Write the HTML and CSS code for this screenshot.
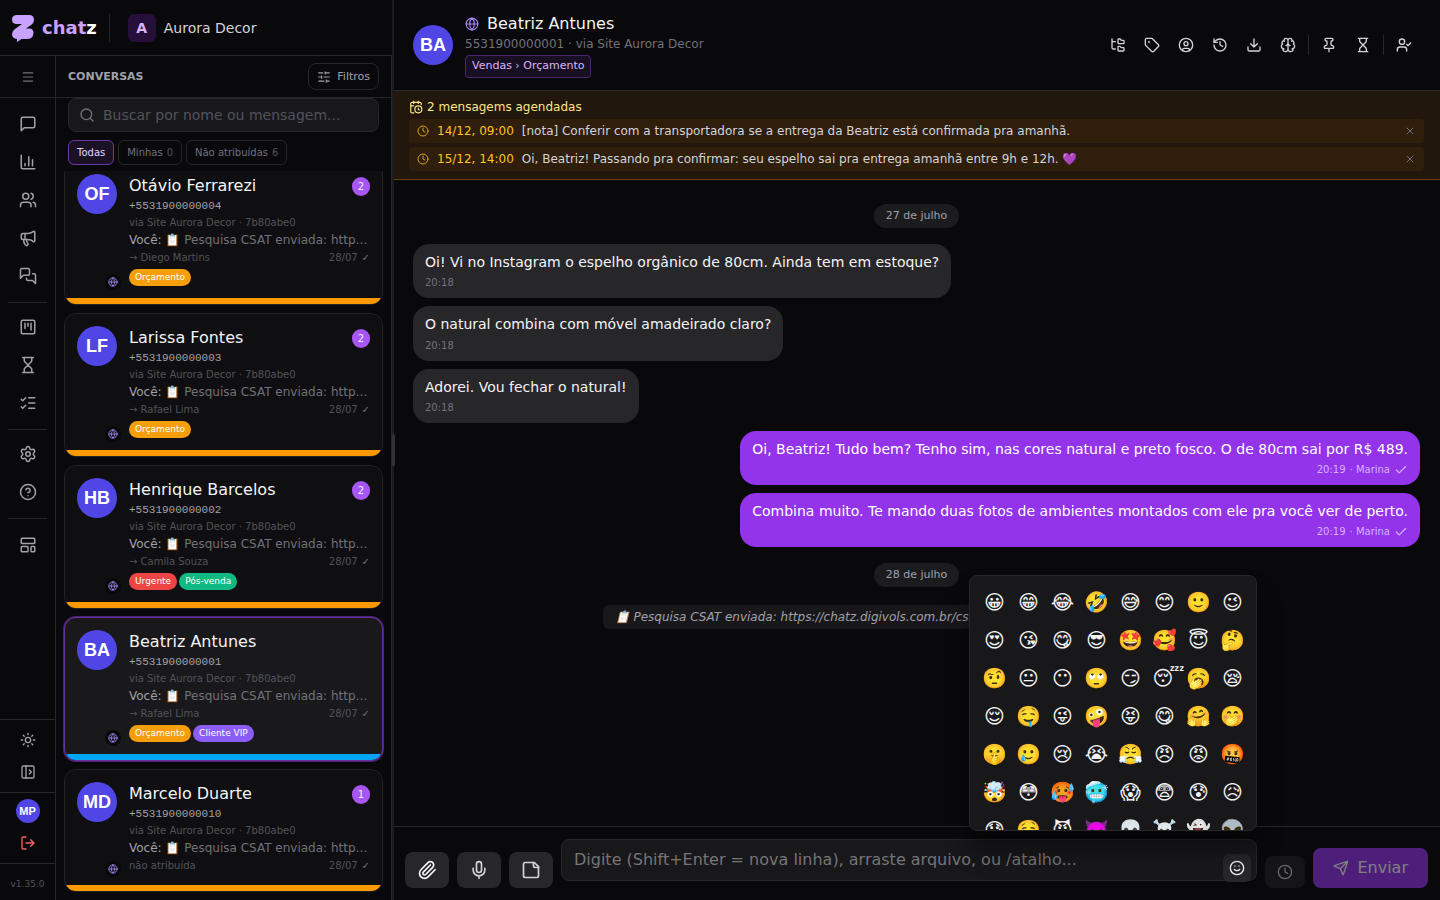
FILE: index.html
```html
<!DOCTYPE html>
<html lang="pt-BR">
<head>
  <meta charset="UTF-8">
  <meta name="viewport" content="width=device-width, initial-scale=1.0">
  <title>chatz</title>
  <link rel="stylesheet" href="styles.css">
</head>
<body>

  <!-- icon set -->
  <svg class="sprite" aria-hidden="true">
    <symbol id="i-menu" viewBox="0 0 24 24"><path d="M4 5h16M4 12h16M4 19h16"/></symbol>
    <symbol id="i-message" viewBox="0 0 24 24"><path d="M21 15a2 2 0 0 1-2 2H7l-4 4V5a2 2 0 0 1 2-2h14a2 2 0 0 1 2 2z"/></symbol>
    <symbol id="i-chart" viewBox="0 0 24 24"><path d="M3 3v16a2 2 0 0 0 2 2h16M18 17V9M13 17V5M8 17v-3"/></symbol>
    <symbol id="i-users" viewBox="0 0 24 24"><path d="M16 21v-2a4 4 0 0 0-4-4H6a4 4 0 0 0-4 4v2M16 3.13a4 4 0 0 1 0 7.75M22 21v-2a4 4 0 0 0-3-3.87"/><circle cx="9" cy="7" r="4"/></symbol>
    <symbol id="i-megaphone" viewBox="0 0 24 24"><path d="M11 6a13 13 0 0 0 8.4-2.8A1 1 0 0 1 21 4v12a1 1 0 0 1-1.6.8A13 13 0 0 0 11 14H5a2 2 0 0 1-2-2V8a2 2 0 0 1 2-2z"/><path d="M6 14a12 12 0 0 0 2.4 7.2 2 2 0 0 0 3.2-2.4A8 8 0 0 1 10 14M8 6v8"/></symbol>
    <symbol id="i-messages" viewBox="0 0 24 24"><path d="M14 9a2 2 0 0 1-2 2H6l-4 4V4a2 2 0 0 1 2-2h8a2 2 0 0 1 2 2z"/><path d="M18 9h2a2 2 0 0 1 2 2v11l-4-4h-6a2 2 0 0 1-2-2v-1"/></symbol>
    <symbol id="i-kanban" viewBox="0 0 24 24"><rect x="3" y="3" width="18" height="18" rx="2"/><path d="M8 7v7M12 7v4M16 7v9"/></symbol>
    <symbol id="i-hourglass" viewBox="0 0 24 24"><path d="M5 22h14M5 2h14M17 22v-4.172a2 2 0 0 0-.586-1.414L12 12l-4.414 4.414A2 2 0 0 0 7 17.828V22M7 2v4.172a2 2 0 0 0 .586 1.414L12 12l4.414-4.414A2 2 0 0 0 17 6.172V2"/></symbol>
    <symbol id="i-tasks" viewBox="0 0 24 24"><path d="m3 17 2 2 4-4M3 7l2 2 4-4M13 5h8M13 12h8M13 19h8"/></symbol>
    <symbol id="i-settings" viewBox="0 0 24 24"><path d="M9.671 4.136a2.34 2.34 0 0 1 4.659 0 2.34 2.34 0 0 0 3.319 1.915 2.34 2.34 0 0 1 2.33 4.033 2.34 2.34 0 0 0 0 3.831 2.34 2.34 0 0 1-2.33 4.033 2.34 2.34 0 0 0-3.319 1.915 2.34 2.34 0 0 1-4.659 0 2.34 2.34 0 0 0-3.32-1.915 2.34 2.34 0 0 1-2.33-4.033 2.34 2.34 0 0 0 0-3.831A2.34 2.34 0 0 1 6.35 6.051a2.34 2.34 0 0 0 3.319-1.915"/><circle cx="12" cy="12" r="3"/></symbol>
    <symbol id="i-help" viewBox="0 0 24 24"><circle cx="12" cy="12" r="10"/><path d="M9.09 9a3 3 0 0 1 5.83 1c0 2-3 3-3 3M12 17h.01"/></symbol>
    <symbol id="i-template" viewBox="0 0 24 24"><rect x="3" y="3" width="18" height="7" rx="1"/><rect x="3" y="14" width="9" height="7" rx="1"/><rect x="16" y="14" width="5" height="7" rx="1"/></symbol>
    <symbol id="i-sun" viewBox="0 0 24 24"><circle cx="12" cy="12" r="4"/><path d="M12 2v2M12 20v2M4.93 4.93l1.41 1.41M17.66 17.66l1.41 1.41M2 12h2M20 12h2M6.34 17.66l-1.41 1.41M19.07 4.93l-1.41 1.41"/></symbol>
    <symbol id="i-panel" viewBox="0 0 24 24"><rect x="3" y="3" width="18" height="18" rx="2"/><path d="M9 3v18M14 9l3 3-3 3"/></symbol>
    <symbol id="i-logout" viewBox="0 0 24 24"><path d="m16 17 5-5-5-5M21 12H9M9 21H5a2 2 0 0 1-2-2V5a2 2 0 0 1 2-2h4"/></symbol>
    <symbol id="i-sliders" viewBox="0 0 24 24"><path d="M10 5H3M12 19H3M14 3v4M16 17v4M21 12h-9M21 19h-5M21 5h-7M8 10v4M8 12H3"/></symbol>
    <symbol id="i-search" viewBox="0 0 24 24"><circle cx="11" cy="11" r="8"/><path d="m21 21-4.34-4.34"/></symbol>
    <symbol id="i-globe" viewBox="0 0 24 24"><circle cx="12" cy="12" r="10"/><path d="M12 2a14.5 14.5 0 0 0 0 20 14.5 14.5 0 0 0 0-20M2 12h20"/></symbol>
    <symbol id="i-tree" viewBox="0 0 24 24"><path d="M20 10a1 1 0 0 0 1-1V6a1 1 0 0 0-1-1h-2.5a1 1 0 0 1-.8-.4l-.9-1.2A1 1 0 0 0 15 3h-2a1 1 0 0 0-1 1v5a1 1 0 0 0 1 1Z"/><path d="M20 21a1 1 0 0 0 1-1v-3a1 1 0 0 0-1-1h-2.9a1 1 0 0 1-.88-.55l-.42-.85a1 1 0 0 0-.92-.6H13a1 1 0 0 0-1 1v5a1 1 0 0 0 1 1Z"/><path d="M3 5a2 2 0 0 0 2 2h3M3 3v13a2 2 0 0 0 2 2h3"/></symbol>
    <symbol id="i-tag" viewBox="0 0 24 24"><path d="M12.586 2.586A2 2 0 0 0 11.172 2H4a2 2 0 0 0-2 2v7.172a2 2 0 0 0 .586 1.414l8.704 8.704a2.426 2.426 0 0 0 3.42 0l6.58-6.58a2.426 2.426 0 0 0 0-3.42z"/><circle cx="7.5" cy="7.5" r=".5" fill="currentColor"/></symbol>
    <symbol id="i-user" viewBox="0 0 24 24"><circle cx="12" cy="12" r="10"/><circle cx="12" cy="10" r="3"/><path d="M7 20.662V19a2 2 0 0 1 2-2h6a2 2 0 0 1 2 2v1.662"/></symbol>
    <symbol id="i-history" viewBox="0 0 24 24"><path d="M3 12a9 9 0 1 0 9-9 9.75 9.75 0 0 0-6.74 2.74L3 8"/><path d="M3 3v5h5M12 7v5l4 2"/></symbol>
    <symbol id="i-download" viewBox="0 0 24 24"><path d="M12 15V3M21 15v4a2 2 0 0 1-2 2H5a2 2 0 0 1-2-2v-4M7 10l5 5 5-5"/></symbol>
    <symbol id="i-brain" viewBox="0 0 24 24"><path d="M12 18V5M15 13a4.17 4.17 0 0 1-3-4 4.17 4.17 0 0 1-3 4M17.598 6.5A3 3 0 1 0 12 5a3 3 0 1 0-5.598 1.5M17.997 5.125a4 4 0 0 1 2.526 5.77M18 18a4 4 0 0 0 2-7.464M19.967 17.483A4 4 0 1 1 12 18a4 4 0 1 1-7.967-.517M6 18a4 4 0 0 1-2-7.464M6.003 5.125a4 4 0 0 0-2.526 5.77"/></symbol>
    <symbol id="i-pin" viewBox="0 0 24 24"><path d="M12 17v5M9 10.76a2 2 0 0 1-1.11 1.79l-1.78.9A2 2 0 0 0 5 15.24V16a1 1 0 0 0 1 1h12a1 1 0 0 0 1-1v-.76a2 2 0 0 0-1.11-1.79l-1.78-.9A2 2 0 0 1 15 10.76V7a1 1 0 0 1 1-1 2 2 0 0 0 0-4H8a2 2 0 0 0 0 4 1 1 0 0 1 1 1z"/></symbol>
    <symbol id="i-usercheck" viewBox="0 0 24 24"><path d="m16 11 2 2 4-4M16 21v-2a4 4 0 0 0-4-4H6a4 4 0 0 0-4 4v2"/><circle cx="9" cy="7" r="4"/></symbol>
    <symbol id="i-calendar" viewBox="0 0 24 24"><path d="M16 14v2.2l1.6 1M16 2v4M21 7.5V6a2 2 0 0 0-2-2H5a2 2 0 0 0-2 2v14a2 2 0 0 0 2 2h3.5M3 10h5M8 2v4"/><circle cx="16" cy="16" r="6"/></symbol>
    <symbol id="i-clock" viewBox="0 0 24 24"><circle cx="12" cy="12" r="10"/><path d="M12 6v6l4 2"/></symbol>
    <symbol id="i-x" viewBox="0 0 24 24"><path d="M18 6 6 18M6 6l12 12"/></symbol>
    <symbol id="i-check" viewBox="0 0 24 24"><path d="M20 6 9 17l-5-5"/></symbol>
    <symbol id="i-clip" viewBox="0 0 24 24"><path d="m16 6-8.414 8.586a2 2 0 0 0 2.829 2.829l8.414-8.586a4 4 0 1 0-5.657-5.657l-8.379 8.551a6 6 0 1 0 8.485 8.485l8.379-8.551"/></symbol>
    <symbol id="i-mic" viewBox="0 0 24 24"><path d="M12 19v3M19 10v2a7 7 0 0 1-14 0v-2"/><rect x="9" y="2" width="6" height="13" rx="3"/></symbol>
    <symbol id="i-note" viewBox="0 0 24 24"><path d="M16 3H5a2 2 0 0 0-2 2v14a2 2 0 0 0 2 2h14a2 2 0 0 0 2-2V8Z"/><path d="M15 3v4a2 2 0 0 0 2 2h4"/></symbol>
    <symbol id="i-smile" viewBox="0 0 24 24"><circle cx="12" cy="12" r="10"/><path d="M8 14s1.5 2 4 2 4-2 4-2M9 9h.01M15 9h.01"/></symbol>
    <symbol id="i-send" viewBox="0 0 24 24"><path d="M14.536 21.686a.5.5 0 0 0 .937-.024l6.5-19a.496.496 0 0 0-.635-.635l-19 6.5a.5.5 0 0 0-.024.937l7.93 3.18a2 2 0 0 1 1.112 1.11zM21.854 2.147l-10.94 10.939"/></symbol>
  </svg>

  <div class="app">
    <aside class="side">
      <header class="brand">
        <svg class="logo" viewBox="0 0 22 28" aria-hidden="true"><path d="M5 1H17Q22 1 22 6Q22 9 19 11L14 14.500H18Q21.500 15 21.500 19Q21 25 15 25H9.500L5 28V25Q0 24.500 0 20Q0 17 3 15L10 10H4Q0 9.500 0 5.500Q0 1 5 1Z"/></svg>
        <span class="brand-name">chat<span>z</span></span>
        <span class="brand-sep"></span>
        <span class="org-badge">A</span>
        <span class="org-name">Aurora Decor</span>
      </header>

      <div class="side-body">
        <nav class="rail" aria-label="Menu">
          <button class="rail-toggle" aria-label="Menu"><svg class="icon s14"><use href="#i-menu"/></svg></button>
          <div class="rail-nav">
            <a href="#" aria-label="Conversas"><svg class="icon s18"><use href="#i-message"/></svg></a>
            <a href="#" aria-label="Painel"><svg class="icon s18"><use href="#i-chart"/></svg></a>
            <a href="#" aria-label="Contatos"><svg class="icon s18"><use href="#i-users"/></svg></a>
            <a href="#" aria-label="Campanhas"><svg class="icon s18"><use href="#i-megaphone"/></svg></a>
            <a href="#" aria-label="Chat interno"><svg class="icon s18"><use href="#i-messages"/></svg></a>
            <hr>
            <a href="#" aria-label="Kanban"><svg class="icon s18"><use href="#i-kanban"/></svg></a>
            <a href="#" aria-label="Espera"><svg class="icon s18"><use href="#i-hourglass"/></svg></a>
            <a href="#" aria-label="Tarefas"><svg class="icon s18"><use href="#i-tasks"/></svg></a>
            <hr>
            <a href="#" aria-label="Configurações"><svg class="icon s18"><use href="#i-settings"/></svg></a>
            <a href="#" aria-label="Ajuda"><svg class="icon s18"><use href="#i-help"/></svg></a>
            <hr>
            <a href="#" aria-label="Modelos"><svg class="icon s18"><use href="#i-template"/></svg></a>
          </div>
          <div class="rail-group">
            <button aria-label="Tema"><svg class="icon s16"><use href="#i-sun"/></svg></button>
            <button aria-label="Expandir"><svg class="icon s16"><use href="#i-panel"/></svg></button>
          </div>
          <div class="rail-group rail-user">
            <button class="me" aria-label="Perfil"><span class="avatar avatar-sm">MP</span></button>
            <button class="logout" aria-label="Sair"><svg class="icon s16"><use href="#i-logout"/></svg></button>
          </div>
          <div class="rail-version">v1.35.0</div>
        </nav>

        <section class="inbox">
          <div class="inbox-head">
            <h2>Conversas</h2>
            <button class="filter-btn"><svg class="icon s14"><use href="#i-sliders"/></svg>Filtros</button>
          </div>
          <div class="inbox-tools">
            <label class="search">
              <svg class="icon s16"><use href="#i-search"/></svg>
              <input type="search" placeholder="Buscar por nome ou mensagem..." aria-label="Buscar">
            </label>
            <div class="chips">
              <button class="chip active">Todas</button>
              <button class="chip">Minhas<span>0</span></button>
              <button class="chip">Não atribuídas<span>6</span></button>
            </div>
          </div>

          <div class="cards">
            <article class="card">
              <div class="card-main">
                <div class="card-side"><span class="avatar">OF</span><span class="channel"><svg class="icon s10"><use href="#i-globe"/></svg></span></div>
                <div class="card-info">
                  <div class="card-name">Otávio Ferrarezi<span class="unread">2</span></div>
                  <div class="card-phone">+5531900000004</div>
                  <div class="card-via">via Site Aurora Decor · 7b80abe0</div>
                  <div class="card-last"><b>Você:</b> 📋 Pesquisa CSAT enviada: https://chatz.digivols.com.br</div>
                  <div class="card-meta"><span>→ Diego Martins</span><span>28/07<i>✓</i></span></div>
                  <div class="tags"><span class="tag amber">Orçamento</span></div>
                </div>
              </div>
              <div class="card-bar"></div>
            </article>

            <article class="card">
              <div class="card-main">
                <div class="card-side"><span class="avatar">LF</span><span class="channel"><svg class="icon s10"><use href="#i-globe"/></svg></span></div>
                <div class="card-info">
                  <div class="card-name">Larissa Fontes<span class="unread">2</span></div>
                  <div class="card-phone">+5531900000003</div>
                  <div class="card-via">via Site Aurora Decor · 7b80abe0</div>
                  <div class="card-last"><b>Você:</b> 📋 Pesquisa CSAT enviada: https://chatz.digivols.com.br</div>
                  <div class="card-meta"><span>→ Rafael Lima</span><span>28/07<i>✓</i></span></div>
                  <div class="tags"><span class="tag amber">Orçamento</span></div>
                </div>
              </div>
              <div class="card-bar"></div>
            </article>

            <article class="card">
              <div class="card-main">
                <div class="card-side"><span class="avatar">HB</span><span class="channel"><svg class="icon s10"><use href="#i-globe"/></svg></span></div>
                <div class="card-info">
                  <div class="card-name">Henrique Barcelos<span class="unread">2</span></div>
                  <div class="card-phone">+5531900000002</div>
                  <div class="card-via">via Site Aurora Decor · 7b80abe0</div>
                  <div class="card-last"><b>Você:</b> 📋 Pesquisa CSAT enviada: https://chatz.digivols.com.br</div>
                  <div class="card-meta"><span>→ Camila Souza</span><span>28/07<i>✓</i></span></div>
                  <div class="tags"><span class="tag red">Urgente</span><span class="tag green">Pós-venda</span></div>
                </div>
              </div>
              <div class="card-bar"></div>
            </article>

            <article class="card selected">
              <div class="card-main">
                <div class="card-side"><span class="avatar">BA</span><span class="channel"><svg class="icon s10"><use href="#i-globe"/></svg></span></div>
                <div class="card-info">
                  <div class="card-name">Beatriz Antunes</div>
                  <div class="card-phone">+5531900000001</div>
                  <div class="card-via">via Site Aurora Decor · 7b80abe0</div>
                  <div class="card-last"><b>Você:</b> 📋 Pesquisa CSAT enviada: https://chatz.digivols.com.br</div>
                  <div class="card-meta"><span>→ Rafael Lima</span><span>28/07<i>✓</i></span></div>
                  <div class="tags"><span class="tag amber">Orçamento</span><span class="tag violet">Cliente VIP</span></div>
                </div>
              </div>
              <div class="card-bar blue"></div>
            </article>

            <article class="card">
              <div class="card-main">
                <div class="card-side"><span class="avatar">MD</span><span class="channel"><svg class="icon s10"><use href="#i-globe"/></svg></span></div>
                <div class="card-info">
                  <div class="card-name">Marcelo Duarte<span class="unread">1</span></div>
                  <div class="card-phone">+5531900000010</div>
                  <div class="card-via">via Site Aurora Decor · 7b80abe0</div>
                  <div class="card-last"><b>Você:</b> 📋 Pesquisa CSAT enviada: https://chatz.digivols.com.br</div>
                  <div class="card-meta"><span>não atribuída</span><span>28/07<i>✓</i></span></div>
                </div>
              </div>
              <div class="card-bar"></div>
            </article>
          </div>
        </section>
      </div>
    </aside>

    <div class="resizer"></div>

    <main class="chat">
      <header class="chat-head">
        <span class="avatar">BA</span>
        <div class="contact">
          <h1><svg class="icon s14"><use href="#i-globe"/></svg>Beatriz Antunes</h1>
          <p>5531900000001 · via Site Aurora Decor</p>
          <span class="stage">Vendas › Orçamento</span>
        </div>
        <div class="actions">
          <button aria-label="Departamento"><svg class="icon s16"><use href="#i-tree"/></svg></button>
          <button aria-label="Etiquetas"><svg class="icon s16"><use href="#i-tag"/></svg></button>
          <button aria-label="Contato"><svg class="icon s16"><use href="#i-user"/></svg></button>
          <button aria-label="Histórico"><svg class="icon s16"><use href="#i-history"/></svg></button>
          <button aria-label="Baixar"><svg class="icon s16"><use href="#i-download"/></svg></button>
          <button aria-label="IA"><svg class="icon s16"><use href="#i-brain"/></svg></button>
          <span class="sep"></span>
          <button aria-label="Fixar"><svg class="icon s16"><use href="#i-pin"/></svg></button>
          <button aria-label="Espera"><svg class="icon s16"><use href="#i-hourglass"/></svg></button>
          <span class="sep"></span>
          <button aria-label="Atribuir"><svg class="icon s16"><use href="#i-usercheck"/></svg></button>
        </div>
      </header>

      <section class="scheduled">
        <h3><svg class="icon s14"><use href="#i-calendar"/></svg>2 mensagems agendadas</h3>
        <div class="sched-row">
          <svg class="icon s12"><use href="#i-clock"/></svg>
          <time>14/12, 09:00</time>
          <span>[nota] Conferir com a transportadora se a entrega da Beatriz está confirmada pra amanhã.</span>
          <button aria-label="Cancelar"><svg class="icon s12"><use href="#i-x"/></svg></button>
        </div>
        <div class="sched-row">
          <svg class="icon s12"><use href="#i-clock"/></svg>
          <time>15/12, 14:00</time>
          <span>Oi, Beatriz! Passando pra confirmar: seu espelho sai pra entrega amanhã entre 9h e 12h. 💜</span>
          <button aria-label="Cancelar"><svg class="icon s12"><use href="#i-x"/></svg></button>
        </div>
      </section>

      <div class="messages">
        <div class="day">27 de julho</div>
        <div class="bubble">Oi! Vi no Instagram o espelho orgânico de 80cm. Ainda tem em estoque?<small>20:18</small></div>
        <div class="bubble">O natural combina com móvel amadeirado claro?<small>20:18</small></div>
        <div class="bubble">Adorei. Vou fechar o natural!<small>20:18</small></div>
        <div class="bubble out">Oi, Beatriz! Tudo bem? Tenho sim, nas cores natural e preto fosco. O de 80cm sai por R$ 489.<small><span>20:19</span><span>· Marina</span><svg class="icon s14"><use href="#i-check"/></svg></small></div>
        <div class="bubble out">Combina muito. Te mando duas fotos de ambientes montados com ele pra você ver de perto.<small><span>20:19</span><span>· Marina</span><svg class="icon s14"><use href="#i-check"/></svg></small></div>
        <div class="day">28 de julho</div>
        <div class="system">📋 Pesquisa CSAT enviada: https://chatz.digivols.com.br/csat/7b80abe0c4d14f6e9a2b83d5f170c9ae</div>
      </div>

      <form class="composer">
        <button type="button" class="tool" aria-label="Anexar"><svg class="icon s20"><use href="#i-clip"/></svg></button>
        <button type="button" class="tool muted" aria-label="Gravar áudio"><svg class="icon s20"><use href="#i-mic"/></svg></button>
        <button type="button" class="tool muted" aria-label="Nota"><svg class="icon s20"><use href="#i-note"/></svg></button>
        <div class="field">
          <textarea rows="1" placeholder="Digite (Shift+Enter = nova linha), arraste arquivo, ou /atalho..." aria-label="Mensagem"></textarea>
          <button type="button" class="emoji-btn" aria-label="Emoji"><svg class="icon s16"><use href="#i-smile"/></svg></button>
          <div class="picker">
            <button type="button">😀</button><button type="button">😁</button><button type="button">😂</button><button type="button">🤣</button>
            <button type="button">😅</button><button type="button">😊</button><button type="button">🙂</button><button type="button">😉</button>
            <button type="button">😍</button><button type="button">😘</button><button type="button">😋</button><button type="button">😎</button>
            <button type="button">🤩</button><button type="button">🥰</button><button type="button">😇</button><button type="button">🤔</button>
            <button type="button">🤨</button><button type="button">😐</button><button type="button">😶</button><button type="button">🙄</button>
            <button type="button">😏</button><button type="button">😴</button><button type="button">🥱</button><button type="button">😪</button>
            <button type="button">😌</button><button type="button">🤤</button><button type="button">😜</button><button type="button">🤪</button>
            <button type="button">😝</button><button type="button">😋</button><button type="button">🤗</button><button type="button">🤭</button>
            <button type="button">🤫</button><button type="button">🥲</button><button type="button">😢</button><button type="button">😭</button>
            <button type="button">😤</button><button type="button">😠</button><button type="button">😡</button><button type="button">🤬</button>
            <button type="button">🤯</button><button type="button">😳</button><button type="button">🥵</button><button type="button">🥶</button>
            <button type="button">😱</button><button type="button">😨</button><button type="button">😰</button><button type="button">😥</button>
            <button type="button">😓</button><button type="button">🤤</button><button type="button">😈</button><button type="button">👿</button>
            <button type="button">💀</button><button type="button">☠️</button><button type="button">👻</button><button type="button">👽</button>
          </div>
        </div>
        <button type="button" class="later" disabled aria-label="Agendar"><svg class="icon s16"><use href="#i-clock"/></svg></button>
        <button type="submit" class="send" disabled><svg class="icon s16"><use href="#i-send"/></svg>Enviar</button>
      </form>
    </main>
  </div>

</body>
</html>
```
FILE: styles.css
```css
* {
  box-sizing: border-box;
}

body {
  margin: 0;
  background: #09090b;
  color: #f4f4f5;
  font-family: "DejaVu Sans", sans-serif;
  font-size: 16px;
  line-height: 24px;
}

h1, h2, h3, p, hr {
  margin: 0;
  font-weight: normal;
}

button, input, textarea {
  margin: 0;
  padding: 0;
  border: 0;
  background: none;
  color: inherit;
  font: inherit;
}

button {
  cursor: pointer;
}

.sprite {
  display: none;
}

/* icons */
.icon {
  flex: none;
  display: block;
  fill: none;
  stroke: currentColor;
  stroke-width: 2;
  stroke-linecap: round;
  stroke-linejoin: round;
}

.s10 { width: 10px; height: 10px; }
.s12 { width: 12px; height: 12px; }
.s14 { width: 14px; height: 14px; }
.s16 { width: 16px; height: 16px; }
.s18 { width: 18px; height: 18px; }
.s20 { width: 20px; height: 20px; }

.app {
  display: flex;
  height: 100vh;
  overflow: hidden;
}

.avatar {
  flex: none;
  display: flex;
  align-items: center;
  justify-content: center;
  width: 40px;
  height: 40px;
  border-radius: 50%;
  background: #4f46e5;
  color: #fff;
  font-family: "Liberation Sans", Arial, sans-serif;
  font-size: 18px;
  font-weight: bold;
}

.avatar-sm {
  width: 24px;
  height: 24px;
  font-size: 11px;
}

/* left side */
.side {
  flex: none;
  display: flex;
  flex-direction: column;
  width: 392px;
}

.brand {
  flex: none;
  display: flex;
  align-items: center;
  height: 56px;
  padding-left: 12px;
  border-bottom: 1px solid #27272a;
}

.logo {
  width: 22px;
  height: 28px;
  margin-right: 8px;
  fill: #c9a2ff;
}

.brand-name {
  color: #c9a2ff;
  font-size: 18px;
  font-weight: bold;
}

.brand-name span {
  color: #fff;
}

.brand-sep {
  width: 1px;
  height: 28px;
  margin: 0 18px 0 12px;
  background: #27272a;
}

.org-badge {
  width: 28px;
  height: 28px;
  margin-right: 8px;
  border-radius: 6px;
  background: #25103a;
  color: #d8b4fe;
  font-size: 14px;
  font-weight: bold;
  line-height: 28px;
  text-align: center;
}

.org-name {
  color: #d4d4d8;
  font-size: 14px;
}

.side-body {
  flex: 1;
  display: flex;
  min-height: 0;
}

.rail {
  flex: none;
  display: flex;
  flex-direction: column;
  width: 56px;
  border-right: 1px solid #27272a;
  color: #a1a1aa;
}

.rail a, .rail button {
  display: flex;
  align-items: center;
  justify-content: center;
  color: inherit;
}

.rail .rail-toggle {
  height: 42px;
  border-bottom: 1px solid #27272a;
  color: #71717a;
}

.rail-nav {
  flex: 1;
  display: flex;
  flex-direction: column;
  gap: 2px;
  padding: 8px;
}

.rail-nav a {
  height: 36px;
}

.rail-nav hr {
  width: 100%;
  height: 1px;
  margin: 6px 0 4px;
  border: 0;
  background: #27272a;
}

.rail-nav hr:last-of-type {
  margin-bottom: 6px;
}

.rail-group {
  padding: 4px 0;
  border-top: 1px solid #27272a;
}

.rail-group button {
  width: 100%;
  height: 32px;
}

.rail-user {
  display: flex;
  flex-direction: column;
  gap: 2px;
}

.rail-user .me {
  height: 28px;
}

.rail .logout {
  color: #f85f63;
}

.rail-version {
  padding: 12px 0 8px;
  border-top: 1px solid #27272a;
  color: #52525b;
  font-size: 9px;
  line-height: 16px;
  text-align: center;
}

.inbox {
  flex: 1;
  display: flex;
  flex-direction: column;
  min-width: 0;
  border-right: 1px solid #27272a;
}

.inbox-head {
  flex: none;
  display: flex;
  align-items: center;
  justify-content: space-between;
  height: 42px;
  padding: 0 12px;
  border-bottom: 1px solid #27272a;
}

.inbox-head h2 {
  color: #a1a1aa;
  font-size: 11px;
  font-weight: bold;
  line-height: 15px;
  text-transform: uppercase;
}

.filter-btn {
  display: flex;
  align-items: center;
  gap: 6px;
  padding: 5px 8px;
  border: 1px solid #27272a;
  border-radius: 8px;
  color: #a1a1aa;
  font-size: 11px;
  line-height: 15px;
}

.inbox-tools {
  flex: none;
  padding: 0 12px 6px;
}

.search {
  display: flex;
  align-items: center;
  gap: 8px;
  height: 34px;
  padding: 0 10px;
  border: 1px solid #27272a;
  border-radius: 8px;
  background: #18181b;
  color: #71717a;
}

.search input {
  flex: 1;
  min-width: 0;
  font-size: 14px;
  outline: 0;
}

.search input::placeholder {
  color: #52525b;
}

.chips {
  display: flex;
  gap: 4px;
  margin-top: 8px;
}

.chip {
  padding: 4px 8px;
  border: 1px solid #27272a;
  border-radius: 6px;
  color: #71717a;
  font-size: 10px;
  line-height: 15px;
}

.chip span {
  margin-left: 4px;
  color: #52525b;
}

.chip.active {
  border-color: #6e35a4;
  background: #1c1226;
  color: #e9d5ff;
}

/* conversation cards, scrolled to the end */
.cards {
  flex: 1;
  display: flex;
  flex-direction: column;
  justify-content: flex-end;
  gap: 8px;
  min-height: 0;
  padding: 0 8px 8px;
  overflow: hidden;
}

.card {
  flex: none;
  border: 1px solid #232326;
  border-radius: 12px;
  background: #0f0f11;
  overflow: hidden;
}

.card.selected {
  border-color: #6b30a0;
  background: #19191c;
  box-shadow: 0 0 0 1px #4a2470;
}

.card-main {
  display: flex;
  gap: 12px;
  padding: 12px;
}

.card-side {
  position: relative;
}

.channel {
  position: absolute;
  right: -4px;
  bottom: -4px;
  display: flex;
  align-items: center;
  justify-content: center;
  width: 16px;
  height: 16px;
  border-radius: 50%;
  background: #09090b;
  color: #a78bfa;
}

.card-info {
  flex: 1;
  min-width: 0;
}

.card-name {
  display: flex;
  align-items: center;
  justify-content: space-between;
}

.unread {
  width: 18px;
  height: 19px;
  border-radius: 10px;
  background: #a855f7;
  font-size: 10px;
  line-height: 19px;
  text-align: center;
}

.card-phone {
  color: #a1a1aa;
  font-family: "Liberation Mono", monospace;
  font-size: 11px;
  line-height: 16px;
}

.card-via {
  margin-top: 1px;
  color: #52525b;
  font-size: 10px;
  line-height: 15px;
}

.card-last {
  margin-top: 2px;
  color: #71717a;
  font-size: 12px;
  line-height: 16px;
  white-space: nowrap;
  overflow: hidden;
  text-overflow: ellipsis;
}

.card-last b {
  color: #a1a1aa;
  font-weight: normal;
}

.card-meta {
  display: flex;
  justify-content: space-between;
  margin-top: 2px;
  color: #52525b;
  font-size: 10px;
  line-height: 15px;
}

.card-meta i {
  margin-left: 4px;
  color: #71717a;
  font-style: normal;
}

.tags {
  display: flex;
  gap: 2px;
  margin-top: 4px;
}

.tag {
  padding: 0 6px;
  border-radius: 9px;
  color: #fff;
  font-size: 9px;
  line-height: 17px;
}

.amber { background: #f59e0b; }
.red { background: #ef4444; }
.green { background: #10b981; }
.violet { background: #8b5cf6; }

.card-bar {
  height: 6px;
  background: #fe9a00;
}

.card-bar.blue {
  background: #00a6f4;
}

.resizer {
  position: relative;
  z-index: 1;
  flex: none;
  width: 2px;
  margin-right: -1px;
  background: #1c1c1f;
}

.resizer::after {
  content: "";
  position: absolute;
  top: 50%;
  left: 0;
  width: 3px;
  height: 32px;
  margin-top: -16px;
  border-radius: 2px;
  background: #323236;
}

/* conversation */
.chat {
  flex: 1;
  display: flex;
  flex-direction: column;
  min-width: 0;
}

.chat-head {
  flex: none;
  display: flex;
  align-items: center;
  gap: 12px;
  padding: 12px 20px;
  border-bottom: 1px solid #27272a;
}

.contact {
  flex: 1;
  min-width: 0;
}

.contact h1 {
  display: flex;
  align-items: center;
  gap: 8px;
  font-size: 16px;
}

.contact h1 .icon {
  color: #a78bfa;
}

.contact p {
  color: #71717a;
  font-size: 12px;
  line-height: 16px;
}

.stage {
  display: block;
  width: fit-content;
  margin-top: 3px;
  padding: 2px 6px 3px;
  border: 1px solid #4b2570;
  border-radius: 4px;
  background: #190f22;
  color: #d8b4fe;
  font-size: 11px;
  line-height: 16px;
}

.actions {
  display: flex;
  align-items: center;
  gap: 2px;
  color: #d4d4d8;
}

.actions button {
  display: flex;
  align-items: center;
  justify-content: center;
  width: 32px;
  height: 32px;
}

.sep {
  width: 1px;
  height: 20px;
  margin: 0 2px;
  background: #27272a;
}

.scheduled {
  flex: none;
  display: flex;
  flex-direction: column;
  gap: 4px;
  padding: 8px 16px;
  border-bottom: 1px solid #633f05;
  background: #21170d;
  font-size: 12px;
  line-height: 16px;
}

.scheduled h3 {
  display: flex;
  align-items: center;
  gap: 4px;
  color: #fee685;
  font-size: 12px;
}

.sched-row {
  display: flex;
  align-items: center;
  gap: 8px;
  padding: 4px 8px;
  border-radius: 4px;
  background: #2e1e0b;
  color: #d4d4d8;
}

.sched-row > .icon {
  color: #d9a018;
}

.sched-row time {
  color: #fcc419;
}

.sched-row span {
  flex: 1;
}

.sched-row button {
  color: #71717a;
}

.messages {
  flex: 1;
  display: flex;
  flex-direction: column;
  align-items: flex-start;
  gap: 8px;
  min-height: 0;
  padding: 16px 20px;
  overflow: hidden;
}

.day {
  align-self: center;
  margin: 8px 0;
  padding: 4px 12px;
  border-radius: 12px;
  background: #1c1c1f;
  color: #a1a1aa;
  font-size: 11px;
  line-height: 16px;
}

.bubble {
  padding: 8px 12px;
  border-radius: 16px;
  background: #27272a;
  font-size: 14px;
  line-height: 1.45;
}

.bubble small {
  display: flex;
  align-items: center;
  gap: 4px;
  margin-top: 3px;
  color: #71717a;
  font-size: 10px;
  line-height: 15px;
}

.bubble.out {
  align-self: flex-end;
  background: #9333ea;
  color: #fff;
}

.bubble.out small {
  justify-content: flex-end;
  color: #d8b4fe;
}

.system {
  align-self: center;
  margin-top: 2px;
  padding: 4px 12px;
  border-radius: 6px;
  background: #18181b;
  color: #a1a1aa;
  font-size: 12px;
  font-style: italic;
  line-height: 16px;
  white-space: nowrap;
}

.composer {
  flex: none;
  display: flex;
  align-items: flex-end;
  gap: 8px;
  padding: 12px;
  border-top: 1px solid #27272a;
}

.tool, .emoji-btn, .later, .send {
  display: flex;
  align-items: center;
  justify-content: center;
}

.tool {
  width: 44px;
  height: 36px;
  border-radius: 8px;
  background: #27272a;
}

.tool.muted {
  color: #d4d4d8;
}

.field {
  position: relative;
  flex: 1;
  padding-bottom: 7px;
}

.field textarea {
  display: block;
  width: 100%;
  height: 42px;
  padding: 8px 48px 8px 12px;
  border: 1px solid #27272a;
  border-radius: 8px;
  background: #18181b;
  outline: 0;
  resize: none;
  overflow: hidden;
}

.field textarea::placeholder {
  color: #757575;
}

.emoji-btn {
  position: absolute;
  right: 6px;
  bottom: 6px;
  width: 28px;
  height: 28px;
  border-radius: 6px;
  background: #27272a;
}

/* emoji popover above the field */
.picker {
  position: absolute;
  right: 0;
  bottom: 100%;
  z-index: 2;
  display: grid;
  grid-template-columns: repeat(8, minmax(0, 1fr));
  align-content: start;
  gap: 2px;
  width: 288px;
  height: 256px;
  margin-bottom: 8px;
  padding: 8px;
  border: 1px solid #27272a;
  border-radius: 8px;
  background: #18181b;
  box-shadow: 0 20px 25px rgba(0, 0, 0, 0.4);
  overflow: hidden;
}

.picker button {
  padding: 4px;
  font-size: 20px;
  line-height: 28px;
}

.later {
  width: 40px;
  height: 32px;
  border-radius: 8px;
  background: #27272a;
  opacity: 0.4;
}

.send {
  gap: 8px;
  height: 40px;
  padding: 0 20px;
  border-radius: 8px;
  background: #9333ea;
  opacity: 0.5;
}
```
